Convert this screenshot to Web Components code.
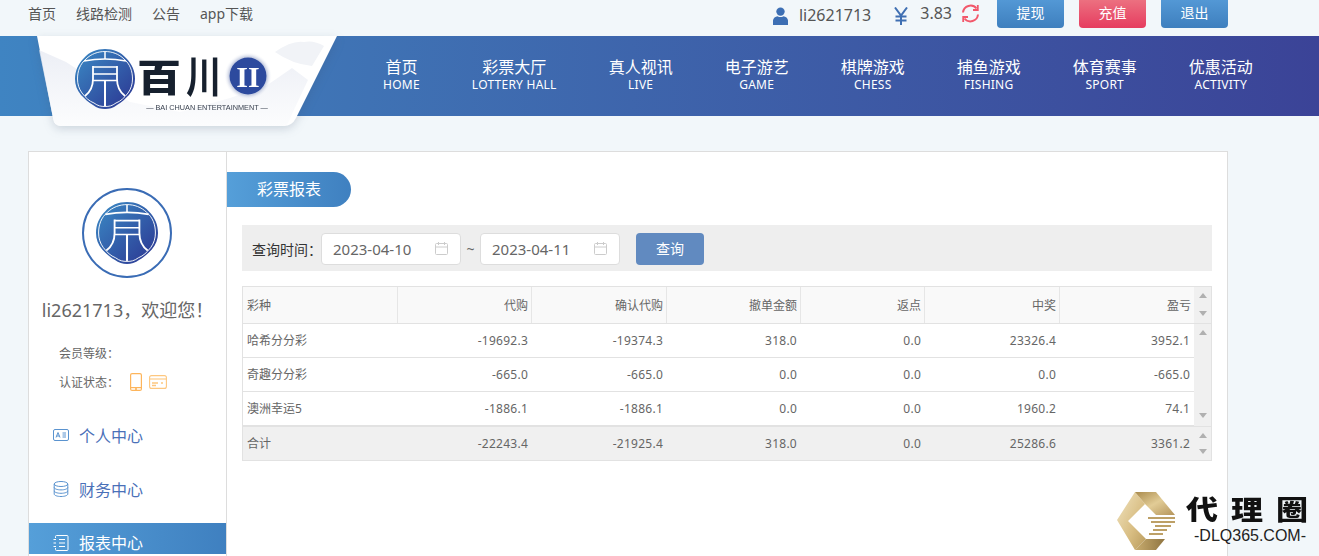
<!DOCTYPE html>
<html lang="zh">
<head>
<meta charset="utf-8">
<title>彩票报表</title>
<style>
  html, body { margin: 0; height: 556px; overflow: hidden; }
  body {
    background: #f2f7fa;
    color: #666;
    font-family: "Noto Sans", "Noto Sans CJK SC", sans-serif;
  }
</style>
</head>
<body>
<top-bar></top-bar>
<site-header>
  <nav-item cn="首页" en="HOME"></nav-item>
  <nav-item cn="彩票大厅" en="LOTTERY HALL"></nav-item>
  <nav-item cn="真人视讯" en="LIVE"></nav-item>
  <nav-item cn="电子游艺" en="GAME"></nav-item>
  <nav-item cn="棋牌游戏" en="CHESS"></nav-item>
  <nav-item cn="捕鱼游戏" en="FISHING"></nav-item>
  <nav-item cn="体育赛事" en="SPORT"></nav-item>
  <nav-item cn="优惠活动" en="ACTIVITY"></nav-item>
</site-header>
<main-panel>
  <side-menu slot="side"></side-menu>
  <report-view></report-view>
</main-panel>
<dlq-mark></dlq-mark>

<script>
const EMBLEM = `<svg viewBox="0 0 60 60" xmlns="http://www.w3.org/2000/svg" width="100%" height="100%" style="display:block">
  <defs><linearGradient id="eg" x1="0" y1="0" x2="1" y2="1"><stop offset="0" stop-color="#3b8cc6"/><stop offset="1" stop-color="#2b3390"/></linearGradient></defs>
  <path d="M30 0C38 0 46 3 51 9C57 15 60 22 60 30C60 36 58 41 54 46C50 50 47 53 42 56C38 59 34 60 30 60C26 60 22 59 18 56C13 53 10 50 6 46C2 41 0 36 0 30C0 22 3 15 9 9C14 3 22 0 30 0Z" fill="url(#eg)"/>
  <g fill="none" stroke="#fff">
    <path d="M30 2.5C37 2.5 44 5 49 10C55 15 57.5 22 57.5 30C57.5 35 56 40 53 44C49 49 46 52 41 54C37 57 34 57.5 30 57.5C26 57.5 23 57 19 54C14 52 11 49 7 44C4 40 2.5 35 2.5 30C2.5 22 5 15 11 10C16 5 23 2.5 30 2.5Z" stroke-width=".9"/>
    <path d="M9 12Q30 8 51 12" stroke-width="1.7"/>
    <path d="M30 3V10" stroke-width="1.5"/>
    <path d="M18 17V30Q18 41 10 47M42 17V30Q42 41 50 47" stroke-width="1.8"/>
    <path d="M18 18H42M18 25H42M18 31.5H42" stroke-width="1.5"/>
    <path d="M30 31V57" stroke-width="2"/>
  </g>
</svg>`;

class BcEmblem extends HTMLElement {
  constructor() {
    super();
    this.attachShadow({ mode: 'open' }).innerHTML = `<style>:host{display:block}</style>${EMBLEM}`;
  }
}
customElements.define('bc-emblem', BcEmblem);

class TopBar extends HTMLElement {
  constructor() {
    super();
    this.attachShadow({ mode: 'open' }).innerHTML = `
<style>
  :host { display: flex; height: 36px; justify-content: space-between; padding: 0 91px 0 28px; font-size: 14px; color: #555; }
  .links { display: flex; gap: 20px; height: 25px; align-items: center; }
  .user { display: flex; align-items: flex-start; }
  .name { font-size: 16px; line-height: 30px; margin: 0 23px 0 11px; }
  .money { font-size: 16px; line-height: 27px; margin: 0 9px 0 12px; }
  svg { display: block; }
  .btn {
    width: 67px; height: 28px; line-height: 26px; margin-left: 15px; text-align: center; color: #fff;
    border-radius: 0 0 4px 4px; background: linear-gradient(#5398d5, #3e7fbe);
  }
  .btn.first { margin-left: 17px; }
  .btn.red { background: linear-gradient(#ec7080, #e63c5f); }
</style>
<div class="links"><span>首页</span><span>线路检测</span><span>公告</span><span>app下载</span></div>
<div class="user">
  <svg style="margin-top:7px" width="15" height="18" viewBox="0 0 15 18"><circle cx="7.5" cy="4.6" r="4.2" fill="#3d6fb4"/><path d="M0 18V13.5C0 11 2.5 9.6 4.5 9.2C6.5 10.4 8.5 10.4 10.5 9.2C12.5 9.6 15 11 15 13.5V18Z" fill="#3d6fb4"/></svg>
  <span class="name">li2621713</span>
  <svg style="margin-top:7px" width="14" height="18" viewBox="0 0 14 18" fill="none" stroke="#3f6fb2" stroke-width="2"><path d="M1 0.5L7 8.5L13 0.5M7 8.5V18M1.5 9.5H12.5M1.5 13.5H12.5"/></svg>
  <span class="money">3.83</span>
  <svg style="margin-top:4px" width="19" height="19" viewBox="0 0 19 19" fill="none" stroke="#f2586b" stroke-width="2"><path d="M2 8.5A7.6 7.6 0 0 1 15.5 4.5M17 10.5A7.6 7.6 0 0 1 3.5 14.5"/><path d="M16.8 1V6H12M2.2 18V13H7" stroke-width="1.8"/></svg>
  <div class="btn first">提现</div><div class="btn red">充值</div><div class="btn">退出</div>
</div>`;
  }
}
customElements.define('top-bar', TopBar);

class NavItem extends HTMLElement {
  constructor() {
    super();
    this.attachShadow({ mode: 'open' }).innerHTML = `
<style>
  :host { display: block; padding: 0 26px; color: #fff; text-align: center; white-space: nowrap; }
  .cn { font-size: 16px; line-height: 20px; margin-top: 21px; }
  .en { font-size: 12px; line-height: 16px; letter-spacing: .25px; }
</style>
<div class="cn"></div><div class="en"></div>`;
  }
  connectedCallback() {
    this.shadowRoot.querySelector('.cn').textContent = this.getAttribute('cn');
    this.shadowRoot.querySelector('.en').textContent = this.getAttribute('en');
  }
}
customElements.define('nav-item', NavItem);

class SiteHeader extends HTMLElement {
  constructor() {
    super();
    this.attachShadow({ mode: 'open' }).innerHTML = `
<style>
  :host { display: flex; position: relative; height: 80px; padding-left: 357px; background: linear-gradient(to right, #3f84c2, #3f72b4 28%, #3b4397); }
  .logo { position: absolute; left: 30px; top: 0; width: 320px; height: 100px; filter: drop-shadow(0 3px 5px rgba(60,80,110,.2)); }
  .em { position: absolute; left: 75px; top: 13px; width: 60px; height: 60px; }
  svg text { font-family: "Noto Sans CJK SC", sans-serif; }
</style>
<svg class="logo" viewBox="0 0 320 100">
  <defs>
    <linearGradient id="mt" x1="0" y1="0" x2="0" y2="1"><stop offset="0" stop-color="#e6e9f2"/><stop offset="1" stop-color="#fbfcfd"/></linearGradient>
    <radialGradient id="seal"><stop offset=".8" stop-color="#b6bfd9"/><stop offset="1" stop-color="#fff" stop-opacity="0"/></radialGradient>
  </defs>
  <path d="M7 0H307L266 82Q262 90 254 90H31Q24 90 23 82Z" fill="#fff"/>
  <path d="M9 14L36 26L64 44L100 66L150 76L200 62L236 50L262 32L278 44L262 78Q258 90 254 90H31Q24 90 23 82Z" fill="url(#mt)" opacity=".75"/>
  <path d="M245 16Q262 4 274 6Q284 4 294 10L282 30Q262 28 245 16Z" fill="#f1f3f7"/>
  <g transform="translate(107 55) scale(1.05 .9)"><text font-size="42" font-weight="900" fill="#16202e">百</text></g>
  <g transform="translate(156 57) scale(.8 1)"><text font-size="44" font-weight="700" fill="#16202e">川</text></g>
  <circle cx="218" cy="40" r="24" fill="url(#seal)" opacity=".7"/>
  <circle cx="218" cy="40" r="18.5" fill="#2d4a9e"/>
  <text x="218" y="51" font-size="30" font-weight="700" fill="#fff" text-anchor="middle" style="font-family:'Liberation Serif',serif">II</text>
  <text x="177" y="74" font-size="7.3" fill="#3a4250" text-anchor="middle" style="font-family:'Liberation Sans',sans-serif">— BAI CHUAN ENTERTAINMENT —</text>
</svg>
<bc-emblem class="em"></bc-emblem>
<slot></slot>`;
  }
}
customElements.define('site-header', SiteHeader);

class MainPanel extends HTMLElement {
  constructor() {
    super();
    this.attachShadow({ mode: 'open' }).innerHTML = `
<style>
  :host { display: flex; width: 1198px; height: 420px; margin: 35px 0 0 28px; background: #fff; border: 1px solid #ddd; border-bottom: 0; }
</style>
<slot name="side"></slot><slot></slot>`;
  }
}
customElements.define('main-panel', MainPanel);

class MenuItem extends HTMLElement {
  constructor() {
    super();
    this.attachShadow({ mode: 'open' }).innerHTML = `
<style>
  :host { display: flex; align-items: center; gap: 10px; height: 40px; margin-bottom: 14px; padding-left: 24px; font-size: 16px; color: #4a70b8; }
  :host([active]) { color: #fff; background: linear-gradient(to right, #559fd9, #3f80c0); margin: 1px 0 0; height: 31px; align-items: flex-start; line-height: 40px; overflow: hidden; }
  ::slotted(svg) { display: block; }
  :host([active]) ::slotted(svg) { margin-top: 12px; }
</style>
<slot></slot>`;
  }
}
customElements.define('menu-item', MenuItem);

class SideMenu extends HTMLElement {
  constructor() {
    super();
    this.attachShadow({ mode: 'open' }).innerHTML = `
<style>
  :host { display: block; flex: none; width: 197px; border-right: 1px solid #ddd; }
  .avatar { display: flex; align-items: center; justify-content: center; box-sizing: border-box; width: 90px; height: 90px; margin: 36px 0 0 53px; border: 2px solid #3a6cb5; border-radius: 50%; }
  bc-emblem { width: 62px; height: 62px; }
  .welcome { margin-top: 18px; font-size: 18px; line-height: 28px; text-align: center; white-space: nowrap; }
  .info { display: flex; align-items: center; height: 29px; padding-left: 30px; font-size: 12px; }
  .info svg { display: block; }
  .lv { margin-top: 14px; }
  nav { margin-top: 19px; }
</style>
<div class="avatar"><bc-emblem></bc-emblem></div>
<div class="welcome">li2621713，欢迎您！</div>
<div class="info lv">会员等级：</div>
<div class="info">认证状态：
  <svg style="margin-left:11px" width="12" height="18" viewBox="0 0 12 18" fill="none" stroke="#fdb55c" stroke-width="1.2"><rect x=".6" y=".6" width="10.8" height="16.8" rx="1.5"/><path d="M.6 14.6H11.4"/><circle cx="6" cy="16" r=".5" fill="#fdb55c"/></svg>
  <svg style="margin-left:7px" width="18" height="14" viewBox="0 0 18 14" fill="none" stroke="#fdc77f" stroke-width="1.1"><rect x=".6" y=".6" width="16.8" height="12.8" rx="2"/><path d="M.6 4H17.4"/><path d="M3 8H9M3 10.5H7M12 8H14" stroke-width="1.3"/></svg>
</div>
<nav>
  <menu-item><svg width="16" height="12" viewBox="0 0 16 12" fill="none" stroke="#5a93cf"><rect x=".5" y=".5" width="15" height="11" rx="1.5"/><path d="M3 8.5L5 3.5L7 8.5M3.8 7H6.2M9.5 4H13M9.5 6H13M9.5 8H13"/></svg>个人中心</menu-item>
  <menu-item><svg width="16" height="16" viewBox="0 0 16 16" fill="none" stroke="#5a93cf"><ellipse cx="8" cy="3" rx="6.8" ry="2.5"/><path d="M1.2 3V13C1.2 14.4 4.2 15.5 8 15.5S14.8 14.4 14.8 13V3M1.2 6.4C1.2 7.8 4.2 8.9 8 8.9S14.8 7.8 14.8 6.4M1.2 9.8C1.2 11.2 4.2 12.3 8 12.3S14.8 11.2 14.8 9.8"/></svg>财务中心</menu-item>
  <menu-item active><svg width="16" height="16" viewBox="0 0 16 16" fill="none" stroke="#fff"><path d="M2.5 3V1.5Q2.5 .5 3.5 .5H14Q15 .5 15 1.5V14.5Q15 15.5 14 15.5H3.5Q2.5 15.5 2.5 14.5V13M.5 4.5H3M.5 8H3M.5 11.5H3M6 4.5H12M6 8H12M6 11.5H12"/></svg>报表中心</menu-item>
</nav>`;
  }
}
customElements.define('side-menu', SideMenu);

class DateField extends HTMLElement {
  constructor() {
    super();
    this.attachShadow({ mode: 'open' }).innerHTML = `
<style>
  :host { display: flex; align-items: center; justify-content: space-between; box-sizing: border-box; width: 140px; height: 32px; padding: 0 12px 0 11px; background: #fff; border: 1px solid #ddd; border-radius: 4px; font-size: 15px; color: #666; }
  svg { display: block; }
</style>
<span></span>
<svg width="13" height="13" viewBox="0 0 13 13" fill="none" stroke="#ccc"><rect x=".5" y="1.5" width="12" height="11" rx="1"/><path d="M.5 5H12.5M3.5 0V3M9.5 0V3"/></svg>`;
  }
  connectedCallback() {
    this.shadowRoot.querySelector('span').textContent = this.getAttribute('value');
  }
}
customElements.define('date-field', DateField);

const COLS = [
  ['彩种', '代购', '确认代购', '撤单金额', '返点', '中奖', '盈亏'],
  ['哈希分分彩', '-19692.3', '-19374.3', '318.0', '0.0', '23326.4', '3952.1'],
  ['奇趣分分彩', '-665.0', '-665.0', '0.0', '0.0', '0.0', '-665.0'],
  ['澳洲幸运5', '-1886.1', '-1886.1', '0.0', '0.0', '1960.2', '74.1'],
  ['合计', '-22243.4', '-21925.4', '318.0', '0.0', '25286.6', '3361.2'],
];

class ReportTable extends HTMLElement {
  constructor() {
    super();
    const cells = r => r.map(c => `<div class="c">${c}</div>`).join('');
    const arrows = `<i class="up"></i><i class="down"></i>`;
    this.attachShadow({ mode: 'open' }).innerHTML = `
<style>
  :host { display: block; margin-top: 15px; border: 1px solid #e2e2e2; font-size: 12px; color: #666; }
  .row { display: grid; grid-template-columns: 155px 134px 135px 134px 124px 135px 134px; height: 33px; border-bottom: 1px solid #e2e2e2; }
  .c { display: flex; align-items: center; justify-content: flex-end; padding: 0 4px 1px; min-width: 0; letter-spacing: .25px; }
  .c:first-child { justify-content: flex-start; letter-spacing: 0; }
  .head .c { letter-spacing: 0; }
  .head .row { height: 36px; background: #f9f9f9; }
  .head .c { border-right: 1px solid #e6e6e6; padding-right: 3px; }
  .head .c:last-child { border-right: 0; }
  .wrap { display: grid; grid-template-columns: 1fr 17px; }
  .sb { display: flex; flex-direction: column; justify-content: space-between; align-items: center; background: #f0f0f0; padding: 6px 0; box-sizing: border-box; }
  .sb i { display: block; width: 0; height: 0; border: 4px solid transparent; }
  .sb i.up { border-top: 0; border-bottom: 5px solid #b0b0b0; }
  .sb i.down { border-bottom: 0; border-top: 5px solid #b0b0b0; }
  .head .sb { border-bottom: 1px solid #e2e2e2; padding-bottom: 7px; }
  .body .sb { padding-bottom: 8px; }
  .foot { border-top: 1px solid #e2e2e2; background: #f0f0f0; }
  .foot .row { border-bottom: 0; background: #f0f0f0; }
</style>
<div class="wrap head"><div class="row">${cells(COLS[0])}</div><div class="sb">${arrows}</div></div>
<div class="wrap body"><div>${COLS.slice(1, 4).map(r => `<div class="row">${cells(r)}</div>`).join('')}</div><div class="sb">${arrows}</div></div>
<div class="wrap foot"><div class="row">${cells(COLS[4])}</div><div class="sb">${arrows}</div></div>`;
  }
}
customElements.define('report-table', ReportTable);

class ReportView extends HTMLElement {
  constructor() {
    super();
    this.attachShadow({ mode: 'open' }).innerHTML = `
<style>
  :host { display: block; flex: 1; min-width: 0; padding-top: 20px; }
  .pill { width: 124px; height: 35px; line-height: 35px; text-align: center; font-size: 16px; color: #fff; border-radius: 0 18px 18px 0; background: linear-gradient(to right, #559fd9, #3f80c0); }
  .body { margin: 18px 15px 0; }
  .filter { display: flex; align-items: center; box-sizing: border-box; height: 46px; padding: 1px 0 0 10px; background: #eee; font-size: 14px; color: #333; }
  .label { width: 69px; white-space: nowrap; }
  .til { width: 19px; text-align: center; color: #666; }
  .query { width: 68px; height: 32px; line-height: 32px; margin-left: 16px; text-align: center; color: #fff; background: #618ac0; border-radius: 4px; }
</style>
<div class="pill">彩票报表</div>
<div class="body">
  <div class="filter">
    <span class="label">查询时间：</span>
    <date-field value="2023-04-10"></date-field><span class="til">~</span><date-field value="2023-04-11"></date-field>
    <div class="query">查询</div>
  </div>
  <report-table></report-table>
</div>`;
  }
}
customElements.define('report-view', ReportView);

class DlqMark extends HTMLElement {
  constructor() {
    super();
    this.attachShadow({ mode: 'open' }).innerHTML = `
<style>
  :host { display: flex; position: absolute; left: 1115px; top: 489px; width: 200px; height: 65px; }
  svg { display: block; flex: none; }
  .txt { margin-left: 10px; color: #111; }
  .cn { display: flex; gap: 13px; width: 122px; height: 32px; margin-top: 5px; font-family: "Noto Sans CJK SC", sans-serif; font-size: 32px; font-weight: 900; line-height: 32px; white-space: nowrap; transform: scaleY(.85); transform-origin: top; }
  .en { font-family: "Liberation Sans", sans-serif; font-size: 16px; line-height: 16px; margin: 2px 0 0 8px; white-space: nowrap; color: #222; }
</style>
<svg width="61" height="64" viewBox="0 0 61 64">
  <defs>
    <linearGradient id="a" x1="0" y1="0" x2="1" y2="1"><stop offset="0" stop-color="#f1e4c0"/><stop offset=".6" stop-color="#d8bd82"/><stop offset="1" stop-color="#b89a5c"/></linearGradient>
    <linearGradient id="b" x1="0" y1="0" x2="1" y2="1"><stop offset="0" stop-color="#a98a4c"/><stop offset=".5" stop-color="#e2cc96"/><stop offset="1" stop-color="#b4945a"/></linearGradient>
    <linearGradient id="c" x1="0" y1="0" x2="1" y2="0"><stop offset="0" stop-color="#c9ad70"/><stop offset="1" stop-color="#8f7440"/></linearGradient>
  </defs>
  <path d="M20 3L30 15L13 32L31 50L20 61L2 31Z" fill="url(#a)"/>
  <path d="M20 3H41L60 26H41L30 15Z" fill="url(#b)"/>
  <path d="M31 50H50L41 61H20Z" fill="url(#c)"/>
  <path d="M33 29H60M36 33H60M40 37H56M38 41H52M34 45H48" stroke="#bda067" stroke-width="2"/>
</svg>
<div class="txt"><div class="cn"><span>代</span><span>理</span><span>圈</span></div><div class="en">-DLQ365.COM-</div></div>`;
  }
}
customElements.define('dlq-mark', DlqMark);
</script>
</body>
</html>
